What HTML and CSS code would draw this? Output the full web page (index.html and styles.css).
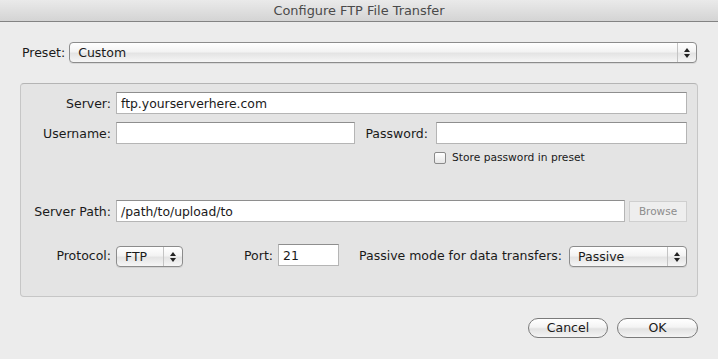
FILE: index.html
```html
<!DOCTYPE html>
<html lang="en">
<head>
    <meta charset="UTF-8">
    <title>Configure FTP File Transfer</title>
    <link rel="stylesheet" href="styles.css">
</head>
<body>
    <div class="titlebar">Configure FTP File Transfer</div>

    <div class="sheet">
        <div class="preset-row">
            <span class="label">Preset:</span>
            <div class="popup popup-wide">
                <span class="popup-text">Custom</span>
                <span class="popup-arrows"><span class="up"></span><span class="down"></span></span>
            </div>
        </div>

        <div class="group">
            <!-- Server -->
            <div class="row row-server">
                <span class="label col-label">Server:</span>
                <div class="field grow">ftp.yourserverhere.com</div>
            </div>

            <!-- Username / Password -->
            <div class="row row-user">
                <span class="label col-label">Username:</span>
                <div class="field user-field"></div>
                <span class="label pass-label">Password:</span>
                <div class="field grow"></div>
            </div>

            <div class="row row-check">
                <span class="checkbox"></span>
                <span class="check-text">Store password in preset</span>
            </div>

            <!-- Server path -->
            <div class="row row-path">
                <span class="label col-label">Server Path:</span>
                <div class="field grow">/path/to/upload/to</div>
                <div class="browse">Browse</div>
            </div>

            <!-- Protocol / Port / Passive -->
            <div class="row row-proto">
                <span class="label col-label">Protocol:</span>
                <div class="popup popup-proto">
                    <span class="popup-text">FTP</span>
                    <span class="popup-arrows"><span class="up"></span><span class="down"></span></span>
                </div>
                <span class="label port-label">Port:</span>
                <div class="field port-field">21</div>
                <span class="label passive-label">Passive mode for data transfers:</span>
                <div class="popup popup-passive">
                    <span class="popup-text">Passive</span>
                    <span class="popup-arrows"><span class="up"></span><span class="down"></span></span>
                </div>
            </div>
        </div>

        <div class="buttons">
            <div class="pill cancel">Cancel</div>
            <div class="pill ok">OK</div>
        </div>
    </div>
</body>
</html>
```

FILE: styles.css
```css
body {
    margin: 0;
    padding: 0;
    width: 718px;
    height: 359px;
    overflow: hidden;
    background-color: #ececec;
    font-family: "DejaVu Sans", "Liberation Sans", sans-serif;
    font-size: 12.5px;
    color: #1a1a1a;
}

.titlebar {
    height: 21px;
    line-height: 22px;
    text-align: center;
    font-size: 12.9px;
    color: #4a4a4a;
    background: linear-gradient(#eaeaea, #d4d4d4);
    border-bottom: 1px solid #838383;
}

.sheet {
    padding: 20px 21px 0 20px;
}

.label {
    white-space: nowrap;
}

/* Preset popup */
.preset-row {
    display: flex;
    align-items: center;
    gap: 4px;
    padding-left: 2px;
}

.popup {
    display: flex;
    align-items: center;
    height: 19px;
    border: 1px solid #8c8c8c;
    border-radius: 4px;
    background: linear-gradient(#ffffff, #f3f3f3 45%, #e4e4e4 55%, #f6f6f6);
    box-shadow: 0 1px 0 rgba(0, 0, 0, 0.08);
    box-sizing: content-box;
}

.popup-wide {
    flex: 1;
}

.popup-text {
    flex: 1;
    padding-left: 8px;
}

.popup-arrows {
    width: 18px;
    height: 100%;
    border-left: 1px solid #c4c4c4;
    display: flex;
    flex-direction: column;
    align-items: center;
    justify-content: center;
    gap: 2px;
}

.up,
.down {
    width: 0;
    height: 0;
    border-left: 3px solid transparent;
    border-right: 3px solid transparent;
}

.up {
    border-bottom: 4px solid #222;
}

.down {
    border-top: 4px solid #222;
}

/* Group box */
.group {
    margin-top: 20px;
    height: 214px;
    border: 1px solid #c6c6c6;
    border-top-color: #b4b4b4;
    border-radius: 4px;
    background-color: #e4e4e4;
    padding: 8px 10px 0 0;
    box-sizing: border-box;
    width: 678px;
}

.row {
    display: flex;
    align-items: center;
}

.col-label {
    width: 90px;
    text-align: right;
    margin-right: 5px;
}

.field {
    height: 20px;
    line-height: 21px;
    background-color: #fff;
    border: 1px solid #b5b5b5;
    border-top-color: #8e8e8e;
    padding-left: 4px;
    font-size: 12.4px;
}

.grow {
    flex: 1;
}

.row-user {
    margin-top: 8px;
}

.user-field {
    width: 233px;
}

.pass-label {
    width: 73px;
    text-align: right;
    margin-right: 8px;
}

.row-check {
    margin-top: 7px;
    padding-left: 413px;
    font-size: 10.7px;
}

.checkbox {
    width: 10px;
    height: 10px;
    border: 1px solid #8a8a8a;
    border-radius: 2px;
    background: linear-gradient(#ffffff, #e6e6e6);
    margin-right: 6px;
}

.row-path {
    margin-top: 36px;
}

.browse {
    width: 56px;
    height: 19px;
    line-height: 19px;
    margin-left: 4px;
    text-align: center;
    border: 1px solid #cfcfcf;
    background-color: #eeeeee;
    color: #8c8c8c;
    font-size: 10.5px;
}

.row-proto {
    margin-top: 21px;
}

.popup-proto {
    width: 65px;
    margin-top: 3px;
}

.port-label {
    margin-left: 61px;
    margin-right: 5px;
}

.port-field {
    width: 55px;
}

.passive-label {
    margin-left: 20px;
    margin-right: 7px;
}

.popup-passive {
    flex: 1;
    margin-top: 3px;
}

/* Bottom buttons */
.buttons {
    display: flex;
    justify-content: flex-end;
    gap: 9px;
    margin-top: 21px;
    margin-right: -1px;
}

.pill {
    height: 18px;
    line-height: 18px;
    text-align: center;
    border: 1px solid #7a7a7a;
    border-radius: 10px;
    background: linear-gradient(#ffffff, #f4f4f4 45%, #e2e2e2 55%, #f4f4f4);
    font-size: 12.5px;
}

.cancel {
    width: 78px;
}

.ok {
    width: 79px;
}
```
